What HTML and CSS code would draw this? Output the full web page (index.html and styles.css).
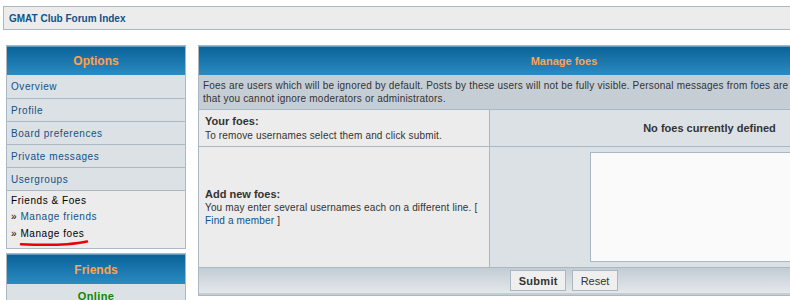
FILE: index.html
```html
<!DOCTYPE html>
<html>
<head>
<meta charset="utf-8">
<link rel="stylesheet" href="styles.css">
</head>
<body>
<div class="navbar"><a class="navlink" href="#">GMAT Club Forum Index</a></div>
<div class="layout">
  <div class="sidebar">
    <div class="sbox">
      <div class="shead">Options</div>
      <a class="sitem" href="#">Overview</a>
      <a class="sitem" href="#">Profile</a>
      <a class="sitem" href="#">Board preferences</a>
      <a class="sitem" href="#">Private messages</a>
      <a class="sitem" href="#">Usergroups</a>
      <div class="sgroup">
        <div class="sgtitle">Friends &amp; Foes</div>
        <div class="sub">» <a class="sublink" href="#">Manage friends</a></div>
        <div class="sub sub-last">» <span class="current">Manage foes</span>
          <svg class="scribble" width="72" height="8" viewBox="0 0 72 8"><path d="M2 5.2 C 16 5.8, 32 6.2, 48 5.2 C 58 4.6, 64 3.6, 68 2.6" fill="none" stroke="#e8000b" stroke-width="2.6" stroke-linecap="round"/></svg>
        </div>
      </div>
    </div>
    <div class="sbox friends">
      <div class="shead">Friends</div>
      <div class="online">Online</div>
    </div>
  </div>
  <div class="main">
    <div class="mhead">Manage foes</div>
    <div class="desc">Foes are users which will be ignored by default. Posts by these users will not be fully visible. Personal messages from foes are still permitted. Please note that you cannot ignore moderators or administrators.</div>
    <div class="row row-foes">
      <div class="lcell">
        <div class="label">Your foes:</div>
        <div class="hint">To remove usernames select them and click submit.</div>
      </div>
      <div class="rcell center"><span class="nofoes">No foes currently defined</span></div>
    </div>
    <div class="row row-add">
      <div class="lcell">
        <div class="label">Add new foes:</div>
        <div class="hint">You may enter several usernames each on a different line. [ <a class="hintlink" href="#">Find a member</a> ]</div>
      </div>
      <div class="rcell center"><textarea class="ta"></textarea></div>
    </div>
    <div class="buttons">
      <button class="btn btn-submit">Submit</button>
      <button class="btn">Reset</button>
    </div>
  </div>
</div>
</body>
</html>
```
FILE: styles.css
```css
html, body {
  margin: 0;
  padding: 0;
  overflow: hidden;
  background: #fff;
  font-family: "Liberation Sans", Arial, sans-serif;
  color: #333;
}
a { text-decoration: none; }

.navbar {
  margin: 6px 0 0 3px;
  width: 900px;
  height: 22px;
  background: #ececec;
  border: 1px solid #a9b8c2;
  display: flex;
  align-items: center;
  padding-left: 5px;
}
.navlink {
  color: #105289;
  font-weight: bold;
  font-size: 10px;
}

.layout {
  display: flex;
  align-items: flex-start;
  gap: 12px;
  margin: 15px 0 0 6px;
  width: 1000px;
}

.sidebar {
  width: 180px;
  display: flex;
  flex-direction: column;
  gap: 4px;
}
.sbox {
  border: 1px solid #a9b8c2;
  background: #dce1e5;
  display: flex;
  flex-direction: column;
}
.shead {
  height: 29px;
  background: linear-gradient(#0a6399, #2b8bc1);
  border-top: 1px solid #5d9cc4;
  box-sizing: border-box;
  color: #ffa34f;
  font-weight: bold;
  font-size: 12px;
  display: flex;
  align-items: center;
  justify-content: center;
}
.sitem {
  height: 23px;
  border-top: 1px solid #a9b8c2;
  box-sizing: border-box;
  padding-left: 4px;
  display: flex;
  align-items: center;
  color: #105289;
  font-size: 10px;
  letter-spacing: 0.55px;
}
.sitem:first-of-type { border-top: none; }
.sgroup {
  border-top: 1px solid #a9b8c2;
  background: #ececec;
  padding: 2px 4px 6px 4px;
  font-size: 10px;
  letter-spacing: 0.55px;
  color: #000;
}
.sgtitle { height: 16px; line-height: 16px; }
.sub {
  position: relative;
  height: 16px;
  line-height: 16px;
  font-size: 10px;
}
.sub-last { height: 17px; line-height: 17px; }
.sublink { color: #105289; }
.current { color: #000; }
.scribble {
  position: absolute;
  left: 8px;
  top: 14px;
}
.friends .shead { height: 30px; }
.online {
  height: 24px;
  display: flex;
  align-items: center;
  justify-content: center;
  color: #0a8a00;
  font-weight: bold;
  font-size: 11px;
  letter-spacing: 0.4px;
}

.main {
  width: 730px;
  border: 1px solid #a9b8c2;
  background: #ececec;
}
.mhead {
  height: 29px;
  background: linear-gradient(#0a6399, #2b8bc1);
  border-top: 1px solid #5d9cc4;
  box-sizing: border-box;
  color: #ffa34f;
  font-weight: bold;
  font-size: 11px;
  display: flex;
  align-items: center;
  justify-content: center;
}
.desc {
  background: #c6ced5;
  height: 35px;
  box-sizing: border-box;
  border-bottom: 1px solid #a9b8c2;
  padding: 4px 4px 0 4px;
  font-size: 10px;
  line-height: 13px;
  letter-spacing: 0.2px;
  color: #333;
}
.row {
  display: grid;
  grid-template-columns: 291px 1fr;
  border-bottom: 1px solid #a9b8c2;
}
.row-foes { height: 36px; }
.row-add { height: 120px; }
.lcell {
  background: #ececec;
  border-right: 1px solid #a9b8c2;
  padding: 0 6px;
  display: flex;
  flex-direction: column;
  justify-content: center;
}
.rcell { background: #dce1e5; }
.center {
  display: flex;
  align-items: center;
  justify-content: center;
}
.label {
  font-weight: bold;
  font-size: 11px;
  color: #333;
  line-height: 14px;
}
.hint {
  font-size: 10px;
  line-height: 13px;
  letter-spacing: 0.15px;
  color: #333;
}
.row-foes .hint { margin-top: 1px; }
.hintlink { color: #105289; }
.nofoes {
  font-weight: bold;
  font-size: 11px;
  color: #333;
}
.ta {
  width: 240px;
  height: 110px;
  box-sizing: border-box;
  border: 1px solid #a9b8c2;
  background: #fafafa;
  resize: none;
  margin: 0;
}
.buttons {
  height: 25px;
  background: linear-gradient(#c3ccd4, #e4e8eb);
  border-bottom: 2px solid #c6ced5;
  display: flex;
  align-items: center;
  justify-content: center;
  gap: 6px;
}
.btn {
  height: 21px;
  box-sizing: border-box;
  border: 1px solid #a9b8c2;
  background: #efefef;
  font-family: "Liberation Sans", Arial, sans-serif;
  font-size: 11px;
  color: #333;
  padding: 0 8px;
  margin: 0;
}
.btn-submit {
  font-weight: bold;
  width: 56px;
  letter-spacing: 0.3px;
}
```
